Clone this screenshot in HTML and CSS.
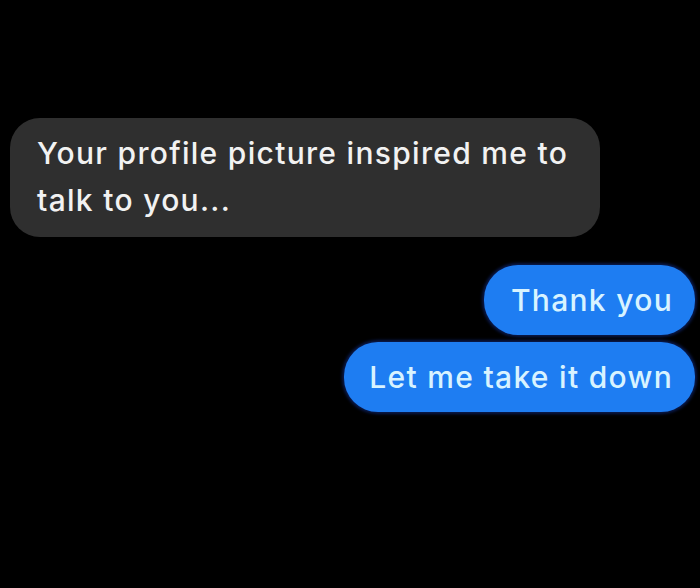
FILE: index.html
```html
<!DOCTYPE html>
<html>
<head>
<meta charset="utf-8">
<link rel="stylesheet" href="styles.css">
</head>
<body>
<div class="chat">
  <div class="bubble incoming">Your profile picture inspired me to talk to you...</div>
  <div class="outgoing">
    <div class="bubble sent sent-first">Thank you</div>
    <div class="bubble sent sent-second">Let me take it down</div>
  </div>
</div>
</body>
</html>
```
FILE: styles.css
```css
html, body {
  margin: 0;
  padding: 0;
  background: #000;
}
body {
  width: 700px;
  height: 588px;
  overflow: hidden;
  font-family: Inter, "Liberation Sans", sans-serif;
  font-size: 30px;
  font-weight: 500;
  letter-spacing: 1.3px;
  line-height: 47px;
}
.chat {
  padding-top: 118px;
  display: flex;
  flex-direction: column;
}
.bubble {
  box-sizing: border-box;
}
.incoming {
  margin-left: 10px;
  width: 590px;
  background: #2f2f2f;
  color: #f2f2f2;
  border-radius: 30px;
  padding: 12px 10px 13px 27px;
}
.outgoing {
  margin-top: 28px;
  display: flex;
  flex-direction: column;
  align-items: flex-end;
  gap: 7px;
  padding-right: 5px;
}
.sent {
  background: #1e7df2;
  color: #d8f3ff;
  border-radius: 34px;
  height: 70px;
  padding: 12px 22px 11px 27px;
  box-shadow: 0 0 3px 2px rgba(12, 30, 90, 0.85);
}
.sent-second {
  padding-left: 25px;
}
```
